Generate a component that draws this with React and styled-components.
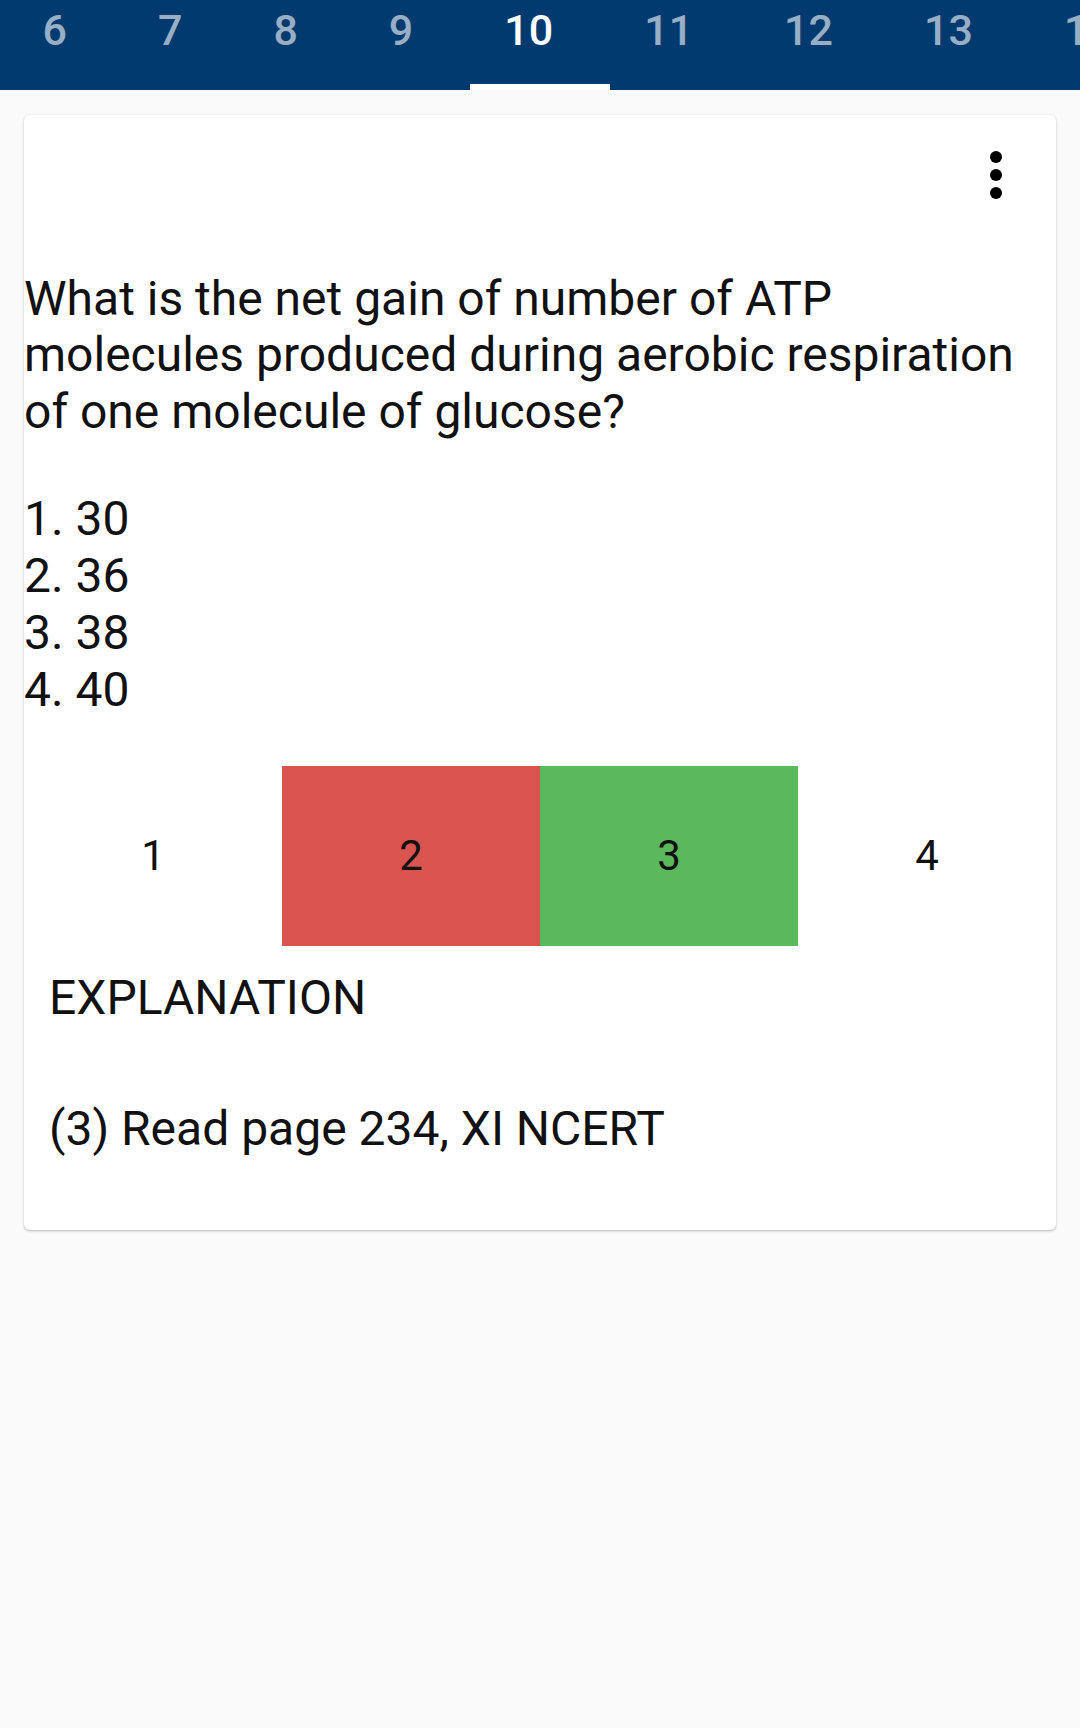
import React from "react";
import styled, { createGlobalStyle } from "styled-components";

const Global = createGlobalStyle`
  html, body { margin: 0; padding: 0; background: #fafafa; }
  body { font-family: Roboto, "Noto Sans", sans-serif; color: #111; }
`;

const Page = styled.div`
  width: 1080px;
  min-height: 1728px;
  background: #fafafa;
  overflow: hidden;
`;

const TabBar = styled.div`
  height: 90px;
  background: #013a6f;
  overflow: hidden;
`;

const TabStrip = styled.div`
  display: flex;
  margin-left: -3px;
  height: 90px;
`;

const Tab = styled.div`
  position: relative;
  flex: none;
  height: 90px;
  box-sizing: border-box;
  padding: 9px 45.5px 0;
  font-size: 43px;
  line-height: 43px;
  font-weight: 500;
  color: ${(p) => (p.$active ? "#ffffff" : "rgba(255,255,255,0.6)")};
`;

const Indicator = styled.div`
  position: absolute;
  left: 11px;
  right: -11px;
  bottom: 0;
  height: 6px;
  background: #ffffff;
`;

const Card = styled.div`
  margin: 25px 24px 0;
  background: #fff;
  border-radius: 6px;
  box-shadow: 0 1px 3px rgba(0, 0, 0, 0.22), 0 1px 1px rgba(0, 0, 0, 0.08);
  padding-bottom: 75px;
`;

const MenuRow = styled.div`
  display: flex;
  justify-content: flex-end;
  padding: 24px 24px 0;
`;

const MenuButton = styled.div`
  width: 72px;
  height: 72px;
  display: flex;
  align-items: center;
  justify-content: center;
`;

const Question = styled.p`
  margin: 60px 0 0;
  font-size: 48px;
  line-height: 56.25px;
  color: #111;
`;

const Options = styled.div`
  margin-top: 50px;
  font-size: 48px;
  line-height: 57px;
  color: #111;
`;

const AnswerRow = styled.div`
  display: grid;
  grid-template-columns: repeat(4, 1fr);
  height: 180px;
  margin-top: 48px;
`;

const AnswerCell = styled.div`
  display: flex;
  align-items: center;
  justify-content: center;
  font-size: 42px;
  color: #111;
  background: ${(p) =>
    p.$state === "wrong" ? "#d9534f" : p.$state === "right" ? "#5cb85c" : "transparent"};
`;

const SectionTitle = styled.div`
  margin-top: 26px;
  padding-left: 25px;
  font-size: 48px;
  line-height: 52px;
  color: #111;
`;

const Explanation = styled.div`
  margin-top: 79px;
  padding-left: 25px;
  font-size: 48px;
  line-height: 52px;
  color: #111;
`;

const tabs = [6, 7, 8, 9, 10, 11, 12, 13, 14, 15];

const MoreIcon = () => (
  <svg width="72" height="72" viewBox="0 0 72 72">
    <circle cx="36" cy="18" r="6" fill="#000" />
    <circle cx="36" cy="36" r="6" fill="#000" />
    <circle cx="36" cy="54" r="6" fill="#000" />
  </svg>
);

export default function App() {
  return (
    <Page>
      <Global />
      <TabBar>
        <TabStrip>
          {tabs.map((t) => (
            <Tab key={t} $active={t === 10}>
              {t}
              {t === 10 && <Indicator />}
            </Tab>
          ))}
        </TabStrip>
      </TabBar>
      <Card>
        <MenuRow>
          <MenuButton>
            <MoreIcon />
          </MenuButton>
        </MenuRow>
        <Question>
          What is the net gain of number of ATP molecules produced during aerobic respiration of
          one molecule of glucose?
        </Question>
        <Options>
          <div>1. 30</div>
          <div>2. 36</div>
          <div>3. 38</div>
          <div>4. 40</div>
        </Options>
        <AnswerRow>
          <AnswerCell>1</AnswerCell>
          <AnswerCell $state="wrong">2</AnswerCell>
          <AnswerCell $state="right">3</AnswerCell>
          <AnswerCell>4</AnswerCell>
        </AnswerRow>
        <SectionTitle>EXPLANATION</SectionTitle>
        <Explanation>(3) Read page 234, XI NCERT</Explanation>
      </Card>
    </Page>
  );
}
